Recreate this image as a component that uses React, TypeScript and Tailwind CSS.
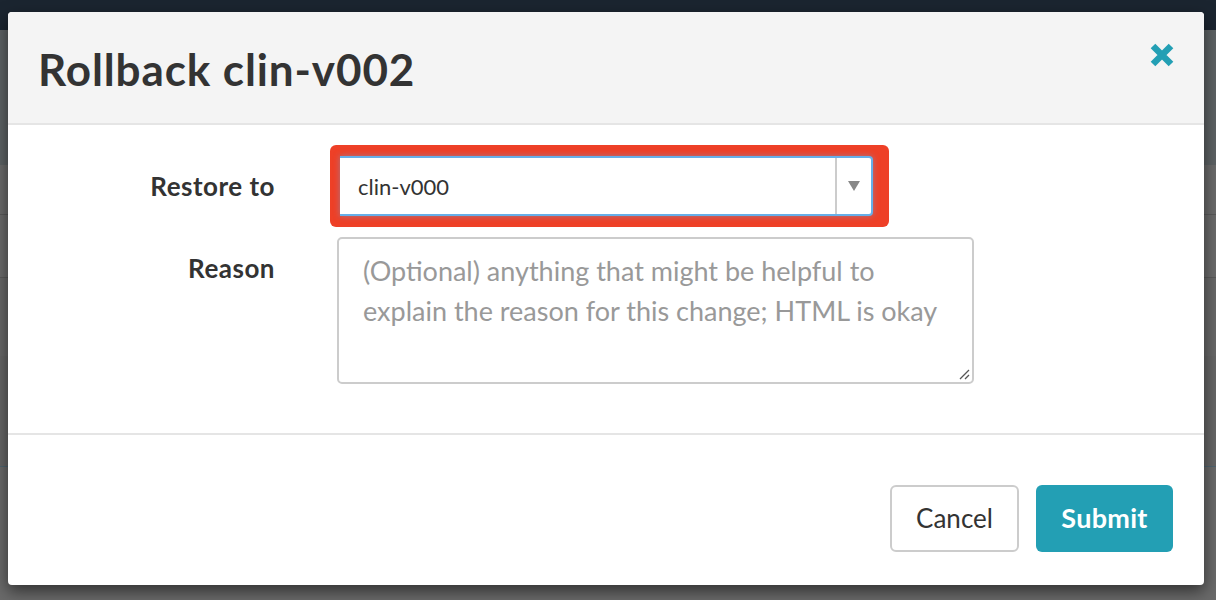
import React from "react";

function CloseIcon() {
  return (
    <svg width="26" height="26" viewBox="0 0 26 26">
      <path
        d="M4 4 L22 22 M22 4 L4 22"
        stroke="#239fb4"
        strokeWidth="6.5"
        strokeLinecap="butt"
        fill="none"
      />
    </svg>
  );
}

export default function App() {
  return (
    <div
      className="relative w-full h-[600px] overflow-hidden bg-[#666666]"
      style={{ fontFamily: "Lato, 'Noto Sans', sans-serif" }}
    >
      {/* page behind the overlay */}
      <div className="flex flex-col h-full">
        <div className="h-[30px] bg-[#1b2530]" />
        <div className="h-[135px] bg-[#5d6264]" />
        <div className="h-[50px] bg-[#6b6b6b] border-b border-[#5a5a5a]" />
        <div className="h-[63px] bg-[#6b6b6b] border-b border-[#5a5a5a]" />
        <div className="h-[78px] bg-[#686868]" />
        <div className="h-[110px] bg-[#666666]" />
        <div className="flex-1 bg-[#6a6a6a] border-t border-[#4f6470]" />
      </div>

      {/* modal */}
      <div className="absolute left-[8px] top-[12px] w-[1196px] h-[573px] bg-white rounded-[4px] shadow-[0_6px_16px_rgba(0,0,0,0.55)] flex flex-col overflow-hidden">
        <header className="h-[113px] shrink-0 bg-[#f4f4f4] border-b-2 border-[#e5e5e5] flex items-center justify-between pl-[30px] pr-[29px]">
          <h1 className="text-[44px] font-bold text-[#333333] tracking-[0.9px] mt-[2px]">
            Rollback clin-v002
          </h1>
          <button className="self-start mt-[30px]">
            <CloseIcon />
          </button>
        </header>

        <div className="h-[310px] shrink-0 border-b-2 border-[#e5e5e5] pt-[20px]">
          <div className="grid grid-cols-[267px_1fr] gap-x-[62px] gap-y-[10px] items-start">
            <div className="h-[82px] flex items-center justify-end text-[26px] font-bold tracking-[0.5px] text-[#333333]">
              Restore to
            </div>
            <div className="ml-[-7px] w-[559px] h-[82px] bg-[#ee4027] rounded-[6px] pl-[10px] pr-[16px] py-[11px]">
              <div className="h-full bg-white border-y-2 border-r-2 border-[#66afe9] rounded-r-[4px] flex items-center shadow-[0_0_6px_rgba(102,175,233,0.5)]">
                <span className="flex-1 pl-[18px] text-[22px] text-[#333333]">
                  clin-v000
                </span>
                <div className="w-[36px] h-full border-l-2 border-[#cccccc] flex items-center justify-center">
                  <svg width="12" height="10" viewBox="0 0 12 10">
                    <path d="M0 0 L12 0 L6 10 Z" fill="#888888" />
                  </svg>
                </div>
              </div>
            </div>

            <div className="h-[62px] flex items-center justify-end text-[26px] font-bold tracking-[0.5px] text-[#333333]">
              Reason
            </div>
            <div className="relative w-[637px] h-[147px] border-2 border-[#cccccc] rounded-[5px] px-[24px] pt-[12px] text-[27px] leading-[40px] text-[#999999]">
              (Optional) anything that might be helpful to explain the reason
              for this change; HTML is okay
              <svg
                className="absolute right-[2px] bottom-[2px]"
                width="12"
                height="12"
                viewBox="0 0 12 12"
              >
                <path
                  d="M11 2 L2 11 M11 7 L7 11"
                  stroke="#555555"
                  strokeWidth="1.3"
                />
              </svg>
            </div>
          </div>
        </div>

        <div className="flex-1 flex items-start justify-end gap-[17px] pt-[50px] pr-[31px]">
          <button className="w-[129px] h-[67px] border-2 border-[#cccccc] rounded-[6px] bg-white text-[26px] text-[#333333]">
            Cancel
          </button>
          <button className="w-[137px] h-[67px] rounded-[6px] bg-[#239fb4] text-[27px] font-bold tracking-[0.3px] text-white">
            Submit
          </button>
        </div>
      </div>
    </div>
  );
}
